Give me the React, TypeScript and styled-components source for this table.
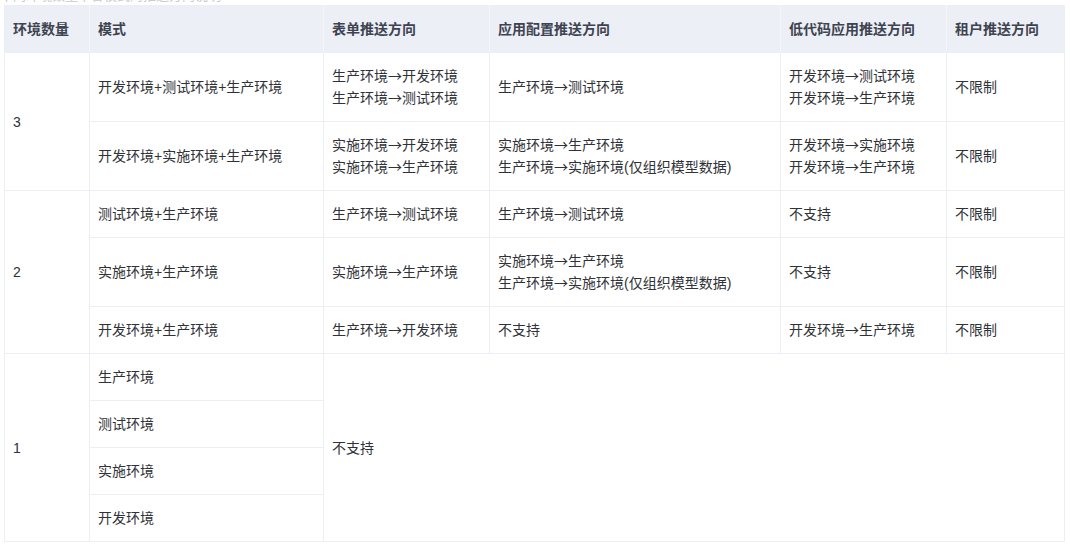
import React from "react";
import styled, { createGlobalStyle } from "styled-components";

const GlobalStyle = createGlobalStyle`
  html, body {
    margin: 0;
    padding: 0;
    background: #ffffff;
  }
  body {
    font-family: "Liberation Sans", "Noto Sans CJK SC", sans-serif;
    overflow: hidden;
  }
`;

const Page = styled.div`
  padding: 0 6px 0 4px;
  width: 1070px;
  box-sizing: border-box;
`;

const Caption = styled.div`
  height: 3px;
  overflow: hidden;
  margin: 0 0 2px -4px;
`;

const CaptionText = styled.p`
  margin: -11px 0 0 0;
  font-size: 13px;
  line-height: 14px;
  color: #c8cbd1;
  white-space: nowrap;
`;

const Table = styled.table`
  width: 1060px;
  table-layout: fixed;
  border-collapse: collapse;
  border: 1px solid #ebeef5;
  font-size: 14px;
  line-height: 22px;
  color: #2f3237;
`;

const HeadCell = styled.th`
  background: #ecEff5;
  color: #3d4350;
  font-weight: 600;
  text-align: left;
  padding: 12px 8px;
  border: 1px solid #f4f6f9;
  border-top-color: #ebeef5;
  border-bottom-color: #ebeef5;
  &:first-child { border-left-color: #ebeef5; }
  &:last-child { border-right-color: #ebeef5; }
`;

const Cell = styled.td`
  padding: 12px 8px;
  border: 1px solid #ebeef5;
  vertical-align: middle;
  text-align: left;
  white-space: nowrap;
`;

const Line = styled.div`
  white-space: nowrap;
  height: 22px;
`;

const Arrow = styled.span`
  font-family: "Noto Sans CJK SC", sans-serif;
  line-height: 0;
`;

type CellData = { text: string[]; rowSpan?: number; colSpan?: number };
type RowData = CellData[];

const c = (t: string | string[], rowSpan?: number, colSpan?: number): CellData => ({
  text: Array.isArray(t) ? t : [t],
  rowSpan,
  colSpan,
});

const headers = ["环境数量", "模式", "表单推送方向", "应用配置推送方向", "低代码应用推送方向", "租户推送方向"];
const widths = [85, 234, 166, 291, 166, 118];

const rows: RowData[] = [
  [
    c("3", 2),
    c("开发环境+测试环境+生产环境"),
    c(["生产环境→开发环境", "生产环境→测试环境"]),
    c("生产环境→测试环境"),
    c(["开发环境→测试环境", "开发环境→生产环境"]),
    c("不限制"),
  ],
  [
    c("开发环境+实施环境+生产环境"),
    c(["实施环境→开发环境", "实施环境→生产环境"]),
    c(["实施环境→生产环境", "生产环境→实施环境(仅组织模型数据)"]),
    c(["开发环境→实施环境", "开发环境→生产环境"]),
    c("不限制"),
  ],
  [
    c("2", 3),
    c("测试环境+生产环境"),
    c("生产环境→测试环境"),
    c("生产环境→测试环境"),
    c("不支持"),
    c("不限制"),
  ],
  [
    c("实施环境+生产环境"),
    c("实施环境→生产环境"),
    c(["实施环境→生产环境", "生产环境→实施环境(仅组织模型数据)"]),
    c("不支持"),
    c("不限制"),
  ],
  [
    c("开发环境+生产环境"),
    c("生产环境→开发环境"),
    c("不支持"),
    c("开发环境→生产环境"),
    c("不限制"),
  ],
  [c("1", 4), c("生产环境"), c("不支持", 4, 4)],
  [c("测试环境")],
  [c("实施环境")],
  [c("开发环境")],
];

function renderText(t: string) {
  const parts = t.split("→");
  return parts.map((p, i) => (
    <React.Fragment key={i}>
      {i > 0 && <Arrow>→</Arrow>}
      {p}
    </React.Fragment>
  ));
}

export default function App() {
  return (
    <>
      <GlobalStyle />
      <Page>
        <Caption>
          <CaptionText>不同环境数量下各模式的推送方向说明</CaptionText>
        </Caption>
        <Table>
          <colgroup>
            {widths.map((w, i) => (
              <col key={i} style={{ width: w }} />
            ))}
          </colgroup>
          <thead>
            <tr>
              {headers.map((h) => (
                <HeadCell key={h}>{h}</HeadCell>
              ))}
            </tr>
          </thead>
          <tbody>
            {rows.map((row, ri) => (
              <tr key={ri}>
                {row.map((cell, ci) => (
                  <Cell key={ci} rowSpan={cell.rowSpan} colSpan={cell.colSpan}>
                    {cell.text.map((t, ti) => (
                      <Line key={ti}>{renderText(t)}</Line>
                    ))}
                  </Cell>
                ))}
              </tr>
            ))}
          </tbody>
        </Table>
      </Page>
    </>
  );
}
